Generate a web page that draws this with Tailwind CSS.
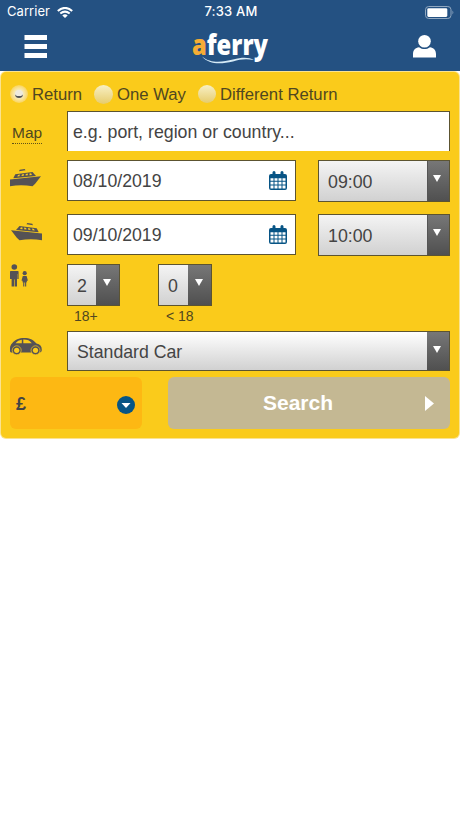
<!DOCTYPE html>
<html lang="en">
<head>
<meta charset="utf-8">
<title>aferry</title>
<script src="https://cdn.jsdelivr.net/npm/@tailwindcss/browser@4"></script>
</head>
<body class="bg-white w-[460px] h-[818px] overflow-hidden font-['Liberation_Sans',Arial,sans-serif] text-[#444]">
<svg class="hidden">
  <symbol id="cal" viewBox="0 0 18 19"><path fill="#075485" d="M2 3h1.500V1.500a1.500 1.500 0 0 1 3 0V3h5V1.500a1.500 1.500 0 0 1 3 0V3H16a2 2 0 0 1 2 2v12a2 2 0 0 1-2 2H2a2 2 0 0 1-2-2V5a2 2 0 0 1 2-2z"/><path fill="#fff" d="M1.500 7.200h3v2.600h-3zM5.500 7.200h3v2.600h-3zM9.500 7.200h3v2.600h-3zM13.500 7.200h3v2.600h-3zM1.500 10.800h3v2.700h-3zM5.500 10.800h3v2.700h-3zM9.500 10.800h3v2.700h-3zM13.500 10.800h3v2.700h-3zM1.500 14.500h3v3h-3zM5.500 14.500h3v3h-3zM9.500 14.500h3v3h-3zM13.500 14.500h3v3h-3z"/></symbol>
  <symbol id="ship" viewBox="0 0 32 18"><g fill="#555255"><path d="M0 10.500 31 7.300C28.500 10 26.500 14 22.500 17.200Q11 15.500 0 17.200z"/><path fill-rule="evenodd" d="M3.500 8.800 5.300 5.300 22.500 2.900 26 7 3.500 9.300zM8 5.900l-.7 1.700 2.200-.3.400-1.700zM12 5.400l-.5 1.700 2.200-.3.200-1.700zM15.800 4.900l-.2 1.700 2.200-.3V4.600zM19.500 4.500v1.700l2.400-.3-.8-1.600z"/><path d="m9 2.200.7-1.400 5-.8.8 1.200z"/></g></symbol>
</svg>

<header class="h-[71px] bg-[#245182] text-white flex flex-col">
  <div class="h-6 grid grid-cols-3 items-center pl-[7px] pr-[6px] text-[13px] font-['Inter','Liberation_Sans',sans-serif]">
    <div class="flex items-center gap-[7px]">
      <span class="tracking-[0.05px]">Carrier</span>
      <svg class="w-4 h-[11px]" viewBox="0 0 16 11"><g fill="none" stroke="#fff" stroke-width="2"><path d="M.8 4Q8-2.200 15.200 4"/><path d="M3.300 6.600Q8 2.600 12.700 6.600"/></g><path fill="#fff" d="M5.300 8.400Q8 6.200 10.700 8.400L8 11z"/></svg>
    </div>
    <div class="text-center text-[13px] tracking-[0.2px] font-medium whitespace-nowrap pl-[1px]">7:33 AM</div>
    <svg class="justify-self-end w-[29px] h-[13px]" viewBox="0 0 29 13"><rect x=".5" y=".5" width="25.500" height="12" rx="3.200" fill="none" stroke="#91a8c0"/><rect x="2.300" y="2.200" width="20" height="8.700" rx="1.300" fill="#fff"/><path d="M27.500 4.500q1.600 2 0 4z" fill="#91a8c0"/></svg>
  </div>
  <div class="flex-1 grid grid-cols-3 items-center pl-6 pr-6 pb-[2px]">
    <svg class="w-[23px] h-[23px]" viewBox="0 0 23 23" fill="#fff"><path d="M.5 0h22.500v5H.5zM.5 9h22.500v5H.5zM.5 18h22.500v5H.5z"/></svg>
    <svg class="justify-self-center w-[78px] h-[42px] overflow-visible" viewBox="0 0 78 42">
      <text x="1" y="29" font-family="Open Sans, Liberation Sans, sans-serif" font-weight="800" font-size="29" textLength="76" lengthAdjust="spacingAndGlyphs" fill="#fff"><tspan fill="#f6ad35">a</tspan>ferry</text>
      <path d="M11 30.500C20 38 32 36 42 33.500S58 31.500 63 34C54 32.500 49 33.500 42 35.500 29 38.500 18 38.500 11 30.500z" fill="#d5eaf6"/>
    </svg>
    <svg class="justify-self-end w-[23px] h-[23px]" viewBox="0 0 23 23" fill="#fff"><circle cx="11.500" cy="6.300" r="6.300"/><path d="M0 22.500V19c0-4 2.500-6.300 6-6.800 3.500 2.500 7.500 2.500 11 0 3.500.5 6 2.800 6 6.800v3.500z"/></svg>
  </div>
</header>

<main class="mt-px mx-px h-[366px] rounded-[5px] bg-[#facb1b] ring-1 ring-[#fae391] pl-[9px] pr-[9px] flex flex-col">
  <div class="h-[39px] shrink-0 flex items-center pt-[6px] text-[16.700px] text-[#504720]">
    <label class="flex items-center w-[84px] gap-[4px]"><span class="w-[18px] h-[18px] rounded-full bg-radial from-[#f7ebbc] from-30% to-[#fbd247] to-75% flex items-center justify-center"><span class="w-2 h-2 rounded-full bg-[#eeeade] border-b-2 border-[#555]"></span></span><span>Return</span></label>
    <label class="flex items-center w-[104px] gap-1"><span class="w-[19px] h-[19px] rounded-full bg-linear-to-b from-[#f8f0c4] to-[#e6cc6c]"></span><span>One Way</span></label>
    <label class="flex items-center gap-1 whitespace-nowrap"><span class="w-[18px] h-[18px] rounded-full bg-linear-to-b from-[#f8f0c4] to-[#e6cc6c]"></span><span>Different Return</span></label>
  </div>

  <div class="h-[49px] shrink-0 flex">
    <div class="w-[57px] pl-[2px] pt-[10px]"><span class="inline-block text-[15.500px] leading-[21px] h-[22px] border-b border-dotted border-[#625315] text-[#504720]">Map</span></div>
    <div class="w-[383px] h-[40px] bg-white border border-b-0 border-[#5c5430] pl-[5px] flex items-center pt-[2px] text-[17.750px]">e.g. port, region or country...</div>
  </div>

  <div class="h-[54px] shrink-0 flex">
    <div class="w-[57px] pt-[9px]"><svg class="w-8 h-[18px]"><use href="#ship"/></svg></div>
    <div class="w-[229px] h-[41px] bg-white border border-[#5c5430] pl-[5px] pr-2 flex items-center justify-between text-[17.700px]"><span class="pt-[2px]">08/10/2019</span><svg class="w-[18px] h-[19px]"><use href="#cal"/></svg></div>
    <div class="ml-[22px] w-[132px] h-[42px] border border-[#5c5430] flex text-[17.800px]">
      <div class="flex-1 bg-linear-to-b from-[#f4f4f4] to-[#d1d1d1] pl-[9px] flex items-center pt-[2px]">09:00</div>
      <div class="w-[22px] bg-linear-to-b from-[#777] to-[#505050] border-l border-[#555] flex justify-center"><svg class="w-2 h-[7px] mt-[14px] -translate-x-[2px]" viewBox="0 0 8 7"><path fill="#fff" d="M0 0h8L4 7z"/></svg></div>
    </div>
  </div>

  <div class="h-[50px] shrink-0 flex">
    <div class="w-[57px] pt-[9px]"><svg class="w-8 h-[18px] -scale-x-100"><use href="#ship"/></svg></div>
    <div class="w-[229px] h-[41px] bg-white border border-[#5c5430] pl-[5px] pr-2 flex items-center justify-between text-[17.700px]"><span class="pt-[2px]">09/10/2019</span><svg class="w-[18px] h-[19px]"><use href="#cal"/></svg></div>
    <div class="ml-[22px] w-[132px] h-[42px] border border-[#5c5430] flex text-[17.800px]">
      <div class="flex-1 bg-linear-to-b from-[#f4f4f4] to-[#d1d1d1] pl-[9px] flex items-center pt-[2px]">10:00</div>
      <div class="w-[22px] bg-linear-to-b from-[#777] to-[#505050] border-l border-[#555] flex justify-center"><svg class="w-2 h-[7px] mt-[14px] -translate-x-[2px]" viewBox="0 0 8 7"><path fill="#fff" d="M0 0h8L4 7z"/></svg></div>
    </div>
  </div>

  <div class="h-[67px] shrink-0 flex">
    <div class="w-[57px]"><svg class="w-[18px] h-[23px]" viewBox="0 0 18 23" fill="#555255"><circle cx="4.300" cy="3" r="2.800"/><path d="M.8 7h7q.8 0 .8.800V15H7.300V10h-.3v12.500H4.700V15.500h-.6v7H1.600V15H0V7.800Q0 7 .8 7z"/><circle cx="14.700" cy="9.200" r="2.100"/><path d="M12.800 12h3.800l1.300 4.500-1.200.4-.7-1.600 1.100 3h-.9v4.200h-1.100v-4h-.8v4h-1.100v-4.200h-.9l1.100-3-.7 1.600-1.200-.4z"/></svg></div>
    <div class="w-[91px]">
      <div class="w-[53px] h-[42px] border border-[#5c5430] flex text-[17.800px]">
        <div class="flex-1 bg-linear-to-b from-[#f4f4f4] to-[#d1d1d1] pl-[9px] flex items-center pt-[2px]">2</div>
        <div class="w-[23px] bg-linear-to-b from-[#777] to-[#505050] flex justify-center"><svg class="w-2 h-[7px] mt-[14px] -translate-x-px" viewBox="0 0 8 7"><path fill="#fff" d="M0 0h8L4 7z"/></svg></div>
      </div>
      <div class="pl-[7px] pt-px text-[14px] leading-[18px] text-[#504720]">18+</div>
    </div>
    <div>
      <div class="w-[54px] h-[42px] border border-[#5c5430] flex text-[17.800px]">
        <div class="flex-1 bg-linear-to-b from-[#f4f4f4] to-[#d1d1d1] pl-[9px] flex items-center pt-[2px]">0</div>
        <div class="w-[23px] bg-linear-to-b from-[#777] to-[#505050] flex justify-center"><svg class="w-2 h-[7px] mt-[14px] -translate-x-px" viewBox="0 0 8 7"><path fill="#fff" d="M0 0h8L4 7z"/></svg></div>
      </div>
      <div class="pl-[8px] pt-px text-[14px] leading-[18px] text-[#504720]">&lt; 18</div>
    </div>
  </div>

  <div class="h-[46px] shrink-0 flex">
    <div class="w-[57px] pt-[7px]"><svg class="w-8 h-[17px]" viewBox="0 0 32 17"><path fill="#555255" fill-rule="evenodd" d="M0 13C-.3 9 .5 7 2 5.500 5 1.500 9 0 14 0c6 0 9 1.500 12.500 5.600 3.500.8 5.300 2.700 5.300 6.200 0 1.700-.8 2.600-2.300 2.800H2C.8 14.600.1 14 0 13zM5.500 5.200h6.300V1.700C9.300 2 7 3.200 5.500 5.200zM13.300 1.600v3.600h8.500c-2-2.500-4.300-3.600-8.500-3.600z"/><g fill="#555255" stroke="#facb1b" stroke-width=".7"><circle cx="6.700" cy="12.300" r="4.500"/><circle cx="25.500" cy="12.300" r="4.500"/></g><circle cx="6.700" cy="12.300" r="2.600" fill="#facb1b"/><circle cx="25.500" cy="12.300" r="2.600" fill="#facb1b"/></svg></div>
    <div class="w-[383px] h-[40px] border border-[#5c5430] flex text-[17.700px]">
      <div class="flex-1 bg-linear-to-b from-[#fff] to-[#d1d1d1] pl-[9px] flex items-center pt-[2px]">Standard Car</div>
      <div class="w-[22px] bg-linear-to-b from-[#777] to-[#505050] flex justify-center"><svg class="w-2 h-[7px] mt-[14px] -translate-x-px" viewBox="0 0 8 7"><path fill="#fff" d="M0 0h8L4 7z"/></svg></div>
    </div>
  </div>

  <div class="h-[52px] shrink-0 flex">
    <button class="w-[132px] h-[52px] rounded-[6px] bg-[#fdb813] pl-[6px] pr-[7px] pt-[3px] flex items-center justify-between font-bold text-[18px]"><span>£</span><svg class="w-[18px] h-[18px]" viewBox="0 0 18 18"><circle cx="9" cy="9" r="9" fill="#075485"/><path fill="#fff" d="M4.500 7h9L9 12z"/></svg></button>
    <button class="ml-[26px] w-[282px] h-[52px] rounded-[6px] bg-[#c4b893] text-white font-bold text-[21px] pl-[95px] pr-4 flex items-center justify-between"><span>Search</span><svg class="w-[9px] h-[15px]" viewBox="0 0 9 15"><path fill="#fff" d="M0 0 9 7.500 0 15z"/></svg></button>
  </div>
</main>
</body>
</html>
